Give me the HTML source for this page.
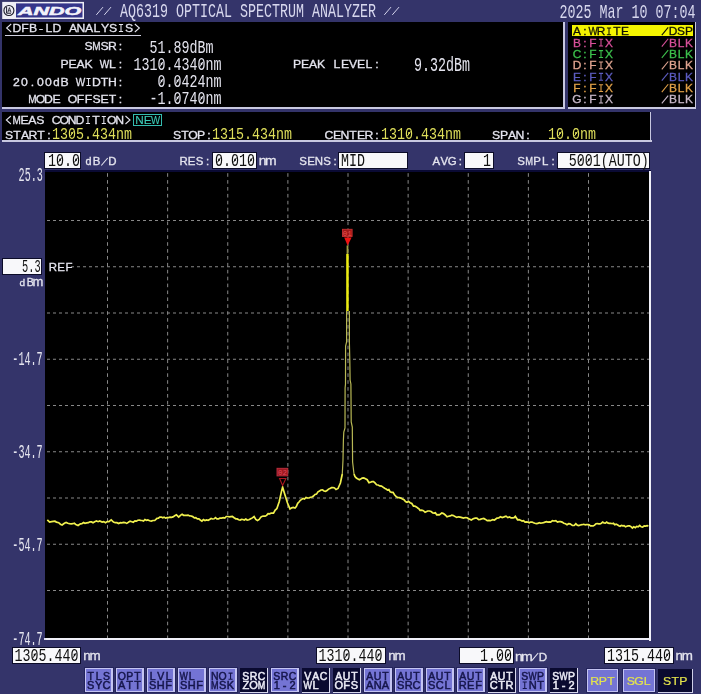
<!DOCTYPE html>
<html><head><meta charset="utf-8"><style>
html,body{margin:0;padding:0;}
body{width:701px;height:694px;background:#34346a;position:relative;overflow:hidden;font-family:"Liberation Mono",monospace;}
body>div{position:absolute;}
.t{position:absolute;white-space:pre;line-height:1;transform-origin:0 0;font-family:"Liberation Mono",monospace;}
</style></head><body>
<svg style="position:absolute;left:0;top:0" width="90" height="22" viewBox="0 0 90 22"><rect x="2.2" y="1.9" width="81.8" height="17.1" fill="#eeeef6"/><rect x="16" y="3.4" width="66.5" height="14.1" fill="#35358a"/><circle cx="8.9" cy="10.5" r="5.0" fill="none" stroke="#1a1a2a" stroke-width="1.1"/><path d="M6.6 7 V13.2 H11" fill="none" stroke="#1a1a2a" stroke-width="1"/><path d="M7.8 12.4 L9.4 7.6 L11 12.4 M8.4 10.8 H10.4" fill="none" stroke="#1a1a2a" stroke-width="0.8"/><text transform="scale(1.85,1)" x="26.8" y="14.9" text-anchor="middle" font-family="Liberation Sans" font-weight="bold" font-style="italic" font-size="11.6" fill="#f2f2fa" stroke="#f2f2fa" stroke-width="0.5">ANDO</text></svg>
<div style="left:2px;top:21.5px;width:561px;height:85.5px;background:#000;"></div>
<div style="left:563px;top:21.5px;width:1.5px;height:87px;background:#c8c8e0;"></div>
<div style="left:2px;top:107px;width:562px;height:1.6px;background:#c8c8e0;"></div>
<div style="left:5px;top:35px;width:136px;height:1.3px;background:#d0d0e0;"></div>
<div style="left:568px;top:22px;width:127px;height:85px;background:#000;"></div>
<div style="left:694.6px;top:22px;width:1.3px;height:86.6px;background:#c8c8e0;"></div>
<div style="left:568px;top:107px;width:128px;height:1.6px;background:#c8c8e0;"></div>
<div style="left:571.5px;top:25.4px;width:121.5px;height:10.4px;background:#f4f400;"></div>
<div style="left:2px;top:112px;width:648px;height:28px;background:#000;"></div>
<div style="left:649.7px;top:112px;width:1.4px;height:29.5px;background:#c8c8e0;"></div>
<div style="left:2px;top:140px;width:649.5px;height:1.5px;background:#c8c8e0;"></div>
<div style="left:133.3px;top:113.6px;width:28.7px;height:12.4px;box-sizing:border-box;border:1.2px solid #34bcb0"></div>
<div style="left:44.1px;top:151.7px;width:37.4px;height:17.80000000000001px;background:#0c0c28;"></div>
<div style="left:45.1px;top:152.7px;width:35.4px;height:15.800000000000011px;background:#f8f8fa;"></div>
<div style="left:211.7px;top:151.7px;width:45.60000000000002px;height:17.80000000000001px;background:#0c0c28;"></div>
<div style="left:212.7px;top:152.7px;width:43.60000000000002px;height:15.800000000000011px;background:#f8f8fa;"></div>
<div style="left:338.4px;top:151.7px;width:69.40000000000003px;height:17.80000000000001px;background:#0c0c28;"></div>
<div style="left:339.4px;top:152.7px;width:67.40000000000003px;height:15.800000000000011px;background:#f8f8fa;"></div>
<div style="left:464.3px;top:151.7px;width:29.69999999999999px;height:17.80000000000001px;background:#0c0c28;"></div>
<div style="left:465.3px;top:152.7px;width:27.69999999999999px;height:15.800000000000011px;background:#f8f8fa;"></div>
<div style="left:557.2px;top:151.7px;width:92.79999999999995px;height:17.80000000000001px;background:#0c0c28;"></div>
<div style="left:558.2px;top:152.7px;width:90.79999999999995px;height:15.800000000000011px;background:#f8f8fa;"></div>
<div style="left:45px;top:170px;width:606px;height:470px;background:#0a0a34;"></div>
<div style="left:45px;top:171.8px;width:604.5px;height:466.7px;background:#000;"></div>
<div style="left:649px;top:171px;width:2px;height:469.5px;background:#f0f0f8;"></div>
<div style="left:45px;top:638px;width:606px;height:2.2px;background:#f0f0f8;"></div>
<div style="left:43.5px;top:637.5px;width:2px;height:2px;background:#e0e0f0;"></div>
<svg style="position:absolute;left:0;top:0" width="701" height="694" viewBox="0 0 701 694">
<g stroke="#888888" stroke-width="1" fill="none"><line x1="107.5" y1="173.2" x2="107.5" y2="638" stroke-dasharray="3.6 3.3"/><line x1="167.625" y1="173.2" x2="167.625" y2="638" stroke-dasharray="3.6 3.3"/><line x1="227.75" y1="173.2" x2="227.75" y2="638" stroke-dasharray="3.6 3.3"/><line x1="287.875" y1="173.2" x2="287.875" y2="638" stroke-dasharray="3.6 3.3"/><line x1="348.0" y1="173.2" x2="348.0" y2="638" stroke-dasharray="3.6 3.3"/><line x1="408.125" y1="173.2" x2="408.125" y2="638" stroke-dasharray="3.6 3.3"/><line x1="468.25" y1="173.2" x2="468.25" y2="638" stroke-dasharray="3.6 3.3"/><line x1="528.375" y1="173.2" x2="528.375" y2="638" stroke-dasharray="3.6 3.3"/><line x1="588.5" y1="173.2" x2="588.5" y2="638" stroke-dasharray="3.6 3.3"/><line x1="47" y1="220.5" x2="649" y2="220.5" stroke-dasharray="3 3"/><line x1="47" y1="266.75" x2="649" y2="266.75" stroke-dasharray="3 3"/><line x1="47" y1="313.0" x2="649" y2="313.0" stroke-dasharray="3 3"/><line x1="47" y1="359.25" x2="649" y2="359.25" stroke-dasharray="3 3"/><line x1="47" y1="405.5" x2="649" y2="405.5" stroke-dasharray="3 3"/><line x1="47" y1="451.75" x2="649" y2="451.75" stroke-dasharray="3 3"/><line x1="47" y1="498.0" x2="649" y2="498.0" stroke-dasharray="3 3"/><line x1="47" y1="544.25" x2="649" y2="544.25" stroke-dasharray="3 3"/><line x1="47" y1="590.5" x2="649" y2="590.5" stroke-dasharray="3 3"/></g>
<polyline points="47.3,519.8 49.6,522.1 51.8,521.6 53.3,521.4 54.9,521.2 56.4,522.1 58.7,522.7 60.4,524.2 62.1,525.0 64.4,523.3 66.1,522.4 67.8,523.3 69.5,523.6 71.3,523.8 72.8,523.7 74.3,523.3 75.8,524.4 78.1,525.5 80.4,523.8 81.9,523.6 83.5,522.5 85.0,523.3 86.7,522.9 88.4,522.7 89.9,521.8 91.5,521.9 93.0,522.7 94.7,521.7 96.4,521.0 98.1,521.7 99.8,521.0 102.1,522.1 103.8,521.6 105.5,522.7 107.2,521.6 108.9,521.6 111.2,519.8 113.5,522.1 115.2,522.7 116.9,522.7 118.6,523.6 120.3,522.7 121.9,522.8 123.4,522.4 125.0,522.6 126.7,523.4 128.4,522.3 130.1,521.1 131.8,521.7 133.3,522.2 134.9,520.9 136.4,521.1 137.8,520.2 139.2,520.0 140.7,520.3 142.1,520.5 143.5,521.0 144.9,519.6 146.4,520.3 147.8,520.0 149.6,520.8 151.3,521.1 153.0,520.5 154.7,520.5 157.0,518.3 158.4,518.2 159.8,517.1 161.3,517.0 162.7,517.7 164.1,517.1 165.6,518.1 167.0,517.6 168.4,517.7 169.9,517.1 171.5,517.3 173.0,516.9 174.7,515.8 176.4,514.8 178.7,517.1 180.4,515.3 182.1,514.3 183.6,515.3 185.1,515.4 186.6,515.4 188.1,515.1 189.7,515.9 191.2,516.0 192.7,516.6 194.3,517.9 195.8,517.7 197.3,518.9 198.8,518.8 200.3,520.0 201.9,521.1 203.4,519.6 205.0,520.5 206.5,520.0 208.1,520.3 209.6,519.4 211.1,518.5 212.6,519.0 214.1,518.8 215.5,517.7 216.9,518.8 218.4,518.9 219.8,518.2 221.6,518.1 223.3,517.7 224.8,518.1 226.3,516.5 227.8,516.5 229.3,516.9 230.9,516.7 232.4,516.5 234.1,517.8 235.8,518.8 237.2,518.9 238.7,519.8 240.1,520.1 241.5,519.4 242.9,519.5 244.3,520.0 245.8,519.0 247.2,520.0 248.9,519.8 250.7,518.8 252.4,517.9 254.1,516.5 255.8,519.5 257.5,520.5 259.2,519.4 260.9,517.1 262.3,516.2 263.8,516.0 265.2,516.2 266.6,515.4 268.1,513.7 269.7,513.8 271.2,513.1 273.5,513.1 275.2,510.1 276.9,508.5 279.2,501.7 281.5,491.4 282.6,487.2 285.0,495.0 287.5,503.0 290.0,509.0 291.7,507.9 293.3,507.5 295.0,508.0 296.3,506.5 297.7,503.3 299.0,502.0 300.3,500.3 301.7,499.4 303.0,498.5 304.5,499.1 306.0,497.4 307.5,498.0 309.0,498.0 310.5,497.2 312.0,497.0 313.5,496.0 315.0,494.5 316.5,494.1 318.0,491.8 319.5,491.0 321.0,490.0 322.5,489.8 324.0,491.0 325.5,491.3 327.0,490.5 328.5,489.1 330.0,488.4 331.5,487.7 333.0,487.5 334.5,488.0 336.0,489.5 338.0,488.5 340.4,483.0 342.3,474.0" fill="none" stroke="#f0f04e" stroke-width="1.7" stroke-linejoin="miter"/>
<polyline points="354.0,474.0 355.0,476.5 356.4,478.1 357.9,478.9 359.3,479.8 360.7,479.1 362.1,478.1 363.8,477.9 365.5,478.7 367.2,479.7 369.0,482.7 370.5,482.2 372.0,481.7 373.5,481.6 375.0,482.9 376.6,484.8 378.1,485.0 379.8,485.9 381.5,486.1 383.0,487.1 384.6,488.3 386.1,489.0 387.5,490.0 388.9,489.5 390.2,491.8 391.6,492.3 393.0,492.4 394.5,494.8 396.0,496.4 397.5,497.5 399.2,497.6 400.9,498.1 402.4,499.0 404.0,499.6 405.5,501.5 407.0,502.2 408.6,501.4 410.1,502.7 411.8,503.5 413.5,506.1 414.9,506.2 416.4,506.9 417.8,508.0 419.2,509.0 420.0,510.4 421.7,510.1 423.4,510.7 425.1,512.3 427.7,511.0 429.4,511.0 431.1,511.5 432.8,513.0 434.1,513.1 435.4,512.8 436.7,514.9 438.0,514.7 439.3,514.9 441.8,513.0 443.5,513.6 445.3,515.0 447.0,516.8 448.6,516.2 450.2,515.9 451.8,515.1 453.4,515.5 455.1,516.6 456.8,517.4 458.5,516.8 460.2,517.2 461.9,517.6 463.6,518.1 465.3,517.5 467.1,517.7 468.8,518.7 471.3,520.0 473.2,518.7 475.2,518.1 476.9,518.1 478.6,519.6 480.3,519.4 482.0,518.7 483.8,518.4 485.5,519.4 487.2,520.7 488.9,520.3 490.6,520.7 492.6,519.6 494.5,520.0 497.0,518.1 498.7,518.0 500.5,516.8 502.2,517.5 504.1,516.9 506.0,516.2 507.8,517.6 509.6,517.0 511.1,517.9 512.6,517.8 514.1,517.6 515.3,516.4 517.6,519.8 519.1,519.7 520.6,520.3 522.1,521.0 523.5,520.6 525.0,522.1 526.4,521.9 527.8,522.1 529.2,522.8 530.6,522.1 532.1,522.0 533.5,522.7 534.9,523.3 536.4,523.7 537.8,523.4 539.2,522.7 540.7,523.2 542.1,523.0 543.5,522.7 545.0,522.1 546.4,521.6 547.9,522.1 549.3,521.8 550.7,522.1 552.4,520.6 554.1,521.0 555.8,520.6 557.5,522.1 559.0,521.7 560.6,521.6 562.1,522.1 563.8,523.3 565.5,523.8 567.0,524.7 568.6,523.7 570.1,523.8 572.4,525.5 574.1,525.5 575.8,523.8 577.3,525.2 578.8,525.5 580.3,525.0 582.0,524.7 583.6,524.3 585.3,524.8 586.6,524.5 587.9,524.6 589.2,524.9 590.5,525.9 591.8,525.9 593.2,526.0 594.6,525.1 596.0,523.7 597.4,523.5 598.7,523.8 600.0,523.9 601.4,523.2 602.7,522.1 604.0,523.0 605.4,523.2 606.7,522.1 608.1,523.1 609.4,523.4 610.8,523.3 612.1,523.7 613.4,523.3 614.8,524.8 616.1,524.2 617.4,524.8 618.8,525.7 620.1,526.3 621.4,525.4 622.8,525.9 624.1,525.7 625.5,526.8 626.8,526.3 628.1,525.9 629.5,525.9 631.0,526.6 632.4,528.0 633.8,526.8 635.3,527.7 636.7,526.4 638.2,526.9 639.7,525.5 641.2,526.8 642.7,527.0 644.2,525.9 645.6,526.2 647.0,525.6 648.4,525.9" fill="none" stroke="#f0f04e" stroke-width="1.7" stroke-linejoin="miter"/>
<polyline points="342.3,474 343,460 343.4,440 343.8,432 345,428 345.1,388 345.5,384 345.6,346 346.6,342 346.6,311" fill="none" stroke="#b8b855" stroke-width="1.2"/>
<polyline points="349.4,311 349.4,343 349.8,360 350.1,380 350.9,384 351.2,422 352.3,427 352.6,462 354,474" fill="none" stroke="#b8b855" stroke-width="1.2"/>
<rect x="346.2" y="254" width="2.5" height="57" fill="#ecec10"/>
<rect x="346.6" y="245.5" width="1.8" height="8.5" fill="#a0a040"/>
<rect x="342.5" y="229.3" width="9.6" height="7.2" fill="#a01818" stroke="#c83030" stroke-width="0.9"/><text x="347.3" y="235.8" text-anchor="middle" font-family="Liberation Mono" font-size="7.5" fill="#e85050" transform="scale(1,1)">01</text>
<path d="M344.2 237.6 L351.6 237.6 L347.6 245.5 Z" fill="#f01212"/>
<rect x="277" y="468.3" width="10.8" height="7.6" fill="#9a1820" stroke="#c03040" stroke-width="0.9"/><text x="282.4" y="475" text-anchor="middle" font-family="Liberation Mono" font-size="7.5" fill="#e04858">02</text>
<path d="M279.6 478.5 L285.9 478.5 L282.6 485.5 Z" fill="none" stroke="#a81820" stroke-width="1.1"/>
</svg>
<div style="left:1.9px;top:258px;width:40.5px;height:17.30000000000001px;background:#0c0c28;"></div>
<div style="left:2.9px;top:259px;width:38.5px;height:15.300000000000011px;background:#f8f8fa;"></div>
<div style="left:11.8px;top:647.3px;width:68.8px;height:16.5px;background:#0c0c28;"></div>
<div style="left:12.8px;top:648.3px;width:66.8px;height:14.5px;background:#f8f8fa;"></div>
<div style="left:315.7px;top:646.6px;width:70.60000000000002px;height:17.399999999999977px;background:#0c0c28;"></div>
<div style="left:316.7px;top:647.6px;width:68.60000000000002px;height:15.399999999999977px;background:#f8f8fa;"></div>
<div style="left:459.2px;top:646.6px;width:55.099999999999966px;height:17.399999999999977px;background:#0c0c28;"></div>
<div style="left:460.2px;top:647.6px;width:53.099999999999966px;height:15.399999999999977px;background:#f8f8fa;"></div>
<div style="left:604.2px;top:646.7px;width:69.39999999999998px;height:17.399999999999977px;background:#0c0c28;"></div>
<div style="left:605.2px;top:647.7px;width:67.39999999999998px;height:15.399999999999977px;background:#f8f8fa;"></div>
<div style="left:84.0px;top:667.2px;width:29.5px;height:26px;background:#24245c;"></div>
<div style="left:85.0px;top:668.2px;width:27.5px;height:23.6px;background:#c4c4f2;"></div>
<div style="left:86.1px;top:669.3px;width:25.3px;height:21.4px;background:#7474d4;"></div>
<div style="left:115.0px;top:667.2px;width:29.5px;height:26px;background:#24245c;"></div>
<div style="left:116.0px;top:668.2px;width:27.5px;height:23.6px;background:#c4c4f2;"></div>
<div style="left:117.1px;top:669.3px;width:25.3px;height:21.4px;background:#7474d4;"></div>
<div style="left:146.0px;top:667.2px;width:29.5px;height:26px;background:#24245c;"></div>
<div style="left:147.0px;top:668.2px;width:27.5px;height:23.6px;background:#c4c4f2;"></div>
<div style="left:148.1px;top:669.3px;width:25.3px;height:21.4px;background:#7474d4;"></div>
<div style="left:177.0px;top:667.2px;width:29.5px;height:26px;background:#24245c;"></div>
<div style="left:178.0px;top:668.2px;width:27.5px;height:23.6px;background:#c4c4f2;"></div>
<div style="left:179.1px;top:669.3px;width:25.3px;height:21.4px;background:#7474d4;"></div>
<div style="left:208.0px;top:667.2px;width:29.5px;height:26px;background:#24245c;"></div>
<div style="left:209.0px;top:668.2px;width:27.5px;height:23.6px;background:#c4c4f2;"></div>
<div style="left:210.1px;top:669.3px;width:25.3px;height:21.4px;background:#7474d4;"></div>
<div style="left:239.5px;top:668px;width:28.5px;height:25px;background:#d8d8ee;"></div>
<div style="left:239.5px;top:668px;width:27.3px;height:23.8px;background:#0a0a30;"></div>
<div style="left:270.0px;top:667.2px;width:29.5px;height:26px;background:#24245c;"></div>
<div style="left:271.0px;top:668.2px;width:27.5px;height:23.6px;background:#c4c4f2;"></div>
<div style="left:272.1px;top:669.3px;width:25.3px;height:21.4px;background:#7474d4;"></div>
<div style="left:301.5px;top:668px;width:28.5px;height:25px;background:#d8d8ee;"></div>
<div style="left:301.5px;top:668px;width:27.3px;height:23.8px;background:#0a0a30;"></div>
<div style="left:332.5px;top:668px;width:28.5px;height:25px;background:#d8d8ee;"></div>
<div style="left:332.5px;top:668px;width:27.3px;height:23.8px;background:#0a0a30;"></div>
<div style="left:363.0px;top:667.2px;width:29.5px;height:26px;background:#24245c;"></div>
<div style="left:364.0px;top:668.2px;width:27.5px;height:23.6px;background:#c4c4f2;"></div>
<div style="left:365.1px;top:669.3px;width:25.3px;height:21.4px;background:#7474d4;"></div>
<div style="left:394.0px;top:667.2px;width:29.5px;height:26px;background:#24245c;"></div>
<div style="left:395.0px;top:668.2px;width:27.5px;height:23.6px;background:#c4c4f2;"></div>
<div style="left:396.1px;top:669.3px;width:25.3px;height:21.4px;background:#7474d4;"></div>
<div style="left:425.0px;top:667.2px;width:29.5px;height:26px;background:#24245c;"></div>
<div style="left:426.0px;top:668.2px;width:27.5px;height:23.6px;background:#c4c4f2;"></div>
<div style="left:427.1px;top:669.3px;width:25.3px;height:21.4px;background:#7474d4;"></div>
<div style="left:456.0px;top:667.2px;width:29.5px;height:26px;background:#24245c;"></div>
<div style="left:457.0px;top:668.2px;width:27.5px;height:23.6px;background:#c4c4f2;"></div>
<div style="left:458.1px;top:669.3px;width:25.3px;height:21.4px;background:#7474d4;"></div>
<div style="left:487.5px;top:668px;width:28.5px;height:25px;background:#d8d8ee;"></div>
<div style="left:487.5px;top:668px;width:27.3px;height:23.8px;background:#0a0a30;"></div>
<div style="left:518.0px;top:667.2px;width:29.5px;height:26px;background:#24245c;"></div>
<div style="left:519.0px;top:668.2px;width:27.5px;height:23.6px;background:#c4c4f2;"></div>
<div style="left:520.1px;top:669.3px;width:25.3px;height:21.4px;background:#7474d4;"></div>
<div style="left:549.5px;top:668px;width:28.5px;height:25px;background:#d8d8ee;"></div>
<div style="left:549.5px;top:668px;width:27.3px;height:23.8px;background:#0a0a30;"></div>
<div style="left:586px;top:667.5px;width:33px;height:25.5px;background:#24245c;"></div>
<div style="left:587px;top:668.5px;width:31px;height:23.4px;background:#c4c4f2;"></div>
<div style="left:588.1px;top:669.6px;width:28.8px;height:21.2px;background:#7474d4;"></div>
<div style="left:621.7px;top:667.5px;width:34.09999999999991px;height:25.5px;background:#24245c;"></div>
<div style="left:622.7px;top:668.5px;width:32.09999999999991px;height:23.4px;background:#c4c4f2;"></div>
<div style="left:623.8000000000001px;top:669.6px;width:29.89999999999991px;height:21.2px;background:#7474d4;"></div>
<div style="left:658.3px;top:668.5px;width:34.30000000000007px;height:24.5px;background:#d0d0e8;"></div>
<div style="left:658.3px;top:668.5px;width:33.30000000000007px;height:23px;background:#0a0a30;"></div>
<svg style="position:absolute;left:0;top:0;will-change:transform" width="701" height="694"><text transform="scale(1,1.4545)" x="124.00 132.00 140.00 148.00 156.00 164.00 180.00 188.00 196.00 204.00 212.00 220.00 228.00 244.00 252.00 260.00 268.00 276.00 284.00 292.00 300.00 316.00 324.00 332.00 340.00 348.00 356.00 364.00 372.00" y="11.89" font-family="Liberation Mono" font-size="13.333" fill="#d8d8ee" text-anchor="middle">AQ6319OPTICALSPECTRUMANALYZER</text><line x1="96.3" y1="14.9" x2="103.0" y2="7.1" stroke="#d4d4ec" stroke-width="1"/><line x1="104.3" y1="14.9" x2="111.0" y2="7.1" stroke="#d4d4ec" stroke-width="1"/><line x1="384.3" y1="14.9" x2="391.0" y2="7.1" stroke="#d4d4ec" stroke-width="1"/><line x1="392.3" y1="14.9" x2="399.0" y2="7.1" stroke="#d4d4ec" stroke-width="1"/><text transform="scale(1,1.4773)" x="563.50 571.50 579.50 587.50 603.50 611.50 619.50 635.50 643.50 659.50 667.50 675.50 683.50 691.50" y="12.18" font-family="Liberation Mono" font-size="13.333" fill="#d8d8ee" text-anchor="middle">2025Mar1007:04</text><path d="M11.20 24.00L6.60 28.00L11.20 32.00" stroke="#e4e4ee" stroke-width="1.05" fill="none"/><path d="M118.92 24.50H123.08M121.00 24.00V32.00M118.92 31.50H123.08" stroke="#e4e4ee" stroke-width="1.05" fill="none"/><path d="M134.80 24.00L139.40 28.00L134.80 32.00" stroke="#e4e4ee" stroke-width="1.05" fill="none"/><text transform="scale(1.0500,1)" x="16.19 23.81 31.43 39.05 46.67 54.29 69.52 77.14 84.76 92.38 100.00 107.62 122.86" y="32.00" font-family="Liberation Sans" font-size="11.628" fill="#e4e4ee" text-anchor="middle" stroke="#e4e4ee" stroke-width="0.3">DFB-LDANALYSS</text><text transform="scale(1.0500,1)" x="84.29 99.52 107.14 114.76" y="50.00" font-family="Liberation Sans" font-size="11.628" fill="#e4e4ee" text-anchor="middle" stroke="#e4e4ee" stroke-width="0.3">SSR:</text><text transform="scale(0.8610,1)" x="112.08" y="50.00" font-family="Liberation Sans" font-size="11.628" fill="#e4e4ee" text-anchor="middle" stroke="#e4e4ee" stroke-width="0.3">M</text><text transform="scale(1,1.4205)" x="153.50 161.50 169.50 177.50 185.50 193.50 201.50 209.50" y="37.66" font-family="Liberation Mono" font-size="13.333" fill="#e4e4ee" text-anchor="middle">51.89dBm</text><text transform="scale(1.0500,1)" x="61.43 69.05 76.67 84.29 107.14 114.76" y="68.00" font-family="Liberation Sans" font-size="11.628" fill="#e4e4ee" text-anchor="middle" stroke="#e4e4ee" stroke-width="0.3">PEAKL:</text><text transform="scale(0.8610,1)" x="121.37" y="68.00" font-family="Liberation Sans" font-size="11.628" fill="#e4e4ee" text-anchor="middle" stroke="#e4e4ee" stroke-width="0.3">W</text><text transform="scale(1,1.4205)" x="137.50 145.50 153.50 161.50 169.50 177.50 185.50 193.50 201.50 209.50 217.50" y="49.63" font-family="Liberation Mono" font-size="13.333" fill="#e4e4ee" text-anchor="middle">1310.4340nm</text><line x1="163.10" y1="61.75" x2="159.90" y2="66.75" stroke="#e4e4ee" stroke-width="1"/><line x1="203.10" y1="61.75" x2="199.90" y2="66.75" stroke="#e4e4ee" stroke-width="1"/><path d="M86.42 78.50H90.58M88.50 78.00V86.00M86.42 85.50H90.58" stroke="#e4e4ee" stroke-width="1.05" fill="none"/><text transform="scale(1.0500,1)" x="15.71 23.33 30.95 38.57 46.19 61.43 91.90 99.52 107.14 114.76" y="86.00" font-family="Liberation Sans" font-size="11.628" fill="#e4e4ee" text-anchor="middle" stroke="#e4e4ee" stroke-width="0.3">20.00BDTH:</text><text transform="scale(1.0500,1)" x="53.81" y="86.00" font-family="Liberation Sans" font-size="10.974" fill="#e4e4ee" text-anchor="middle" stroke="#e4e4ee" stroke-width="0.3">d</text><text transform="scale(0.8610,1)" x="93.50" y="86.00" font-family="Liberation Sans" font-size="11.628" fill="#e4e4ee" text-anchor="middle" stroke="#e4e4ee" stroke-width="0.3">W</text><text transform="scale(1,1.4205)" x="161.50 169.50 177.50 185.50 193.50 201.50 209.50 217.50" y="61.60" font-family="Liberation Mono" font-size="13.333" fill="#e4e4ee" text-anchor="middle">0.0424nm</text><line x1="163.10" y1="78.75" x2="159.90" y2="83.75" stroke="#e4e4ee" stroke-width="1"/><line x1="179.10" y1="78.75" x2="175.90" y2="83.75" stroke="#e4e4ee" stroke-width="1"/><text transform="scale(0.8610,1)" x="37.75" y="103.00" font-family="Liberation Sans" font-size="11.628" fill="#e4e4ee" text-anchor="middle" stroke="#e4e4ee" stroke-width="0.3">M</text><text transform="scale(1.0500,1)" x="38.57 46.19 53.81 69.05 76.67 84.29 91.90 99.52 107.14 114.76" y="103.00" font-family="Liberation Sans" font-size="11.628" fill="#e4e4ee" text-anchor="middle" stroke="#e4e4ee" stroke-width="0.3">ODEOFFSET:</text><text transform="scale(1,1.4205)" x="153.50 161.50 169.50 177.50 185.50 193.50 201.50 209.50 217.50" y="73.57" font-family="Liberation Mono" font-size="13.333" fill="#e4e4ee" text-anchor="middle">-1.0740nm</text><line x1="179.10" y1="95.75" x2="175.90" y2="100.75" stroke="#e4e4ee" stroke-width="1"/><line x1="203.10" y1="95.75" x2="199.90" y2="100.75" stroke="#e4e4ee" stroke-width="1"/><text transform="scale(1.0500,1)" x="282.86 290.48 298.10 305.71 320.95 328.57 336.19 343.81 351.43 359.05" y="68.00" font-family="Liberation Sans" font-size="11.628" fill="#e4e4ee" text-anchor="middle" stroke="#e4e4ee" stroke-width="0.3">PEAKLEVEL:</text><text transform="scale(1,1.4773)" x="418.00 426.00 434.00 442.00 450.00 458.00 466.00" y="48.06" font-family="Liberation Mono" font-size="13.333" fill="#e4e4ee" text-anchor="middle">9.32dBm</text><path d="M606.92 27.90H611.08M609.00 27.40V35.20M606.92 34.70H611.08" stroke="#101000" stroke-width="1.05" fill="none"/><text transform="scale(1.0500,1)" x="549.52 557.14 572.38 587.62 595.24" y="35.20" font-family="Liberation Sans" font-size="11.337" fill="#101000" text-anchor="middle" stroke="#101000" stroke-width="0.3">A:RTE</text><text transform="scale(0.8610,1)" x="688.73" y="35.20" font-family="Liberation Sans" font-size="11.337" fill="#101000" text-anchor="middle" stroke="#101000" stroke-width="0.3">W</text><line x1="661.80" y1="35.20" x2="668.20" y2="27.40" stroke="#101000" stroke-width="1.1"/><text transform="scale(1.0500,1)" x="640.95 648.57 656.19" y="35.20" font-family="Liberation Sans" font-size="11.337" fill="#101000" text-anchor="middle" stroke="#101000" stroke-width="0.3">DSP</text><path d="M598.92 39.27H603.08M601.00 38.77V46.57M598.92 46.07H603.08" stroke="#d8509a" stroke-width="1.05" fill="none"/><text transform="scale(1.0500,1)" x="549.52 557.14 564.76 580.00" y="46.57" font-family="Liberation Sans" font-size="11.337" fill="#d8509a" text-anchor="middle" stroke="#d8509a" stroke-width="0.3">B:FX</text><line x1="661.80" y1="46.57" x2="668.20" y2="38.77" stroke="#d8509a" stroke-width="1.1"/><text transform="scale(1.0500,1)" x="640.95 648.57 656.19" y="46.57" font-family="Liberation Sans" font-size="11.337" fill="#d8509a" text-anchor="middle" stroke="#d8509a" stroke-width="0.3">BLK</text><path d="M598.92 50.64H603.08M601.00 50.14V57.94M598.92 57.44H603.08" stroke="#3cc04c" stroke-width="1.05" fill="none"/><text transform="scale(1.0500,1)" x="549.52 557.14 564.76 580.00" y="57.94" font-family="Liberation Sans" font-size="11.337" fill="#3cc04c" text-anchor="middle" stroke="#3cc04c" stroke-width="0.3">C:FX</text><line x1="661.80" y1="57.94" x2="668.20" y2="50.14" stroke="#3cc04c" stroke-width="1.1"/><text transform="scale(1.0500,1)" x="640.95 648.57 656.19" y="57.94" font-family="Liberation Sans" font-size="11.337" fill="#3cc04c" text-anchor="middle" stroke="#3cc04c" stroke-width="0.3">BLK</text><path d="M598.92 62.01H603.08M601.00 61.51V69.31M598.92 68.81H603.08" stroke="#e0a490" stroke-width="1.05" fill="none"/><text transform="scale(1.0500,1)" x="549.52 557.14 564.76 580.00" y="69.31" font-family="Liberation Sans" font-size="11.337" fill="#e0a490" text-anchor="middle" stroke="#e0a490" stroke-width="0.3">D:FX</text><line x1="661.80" y1="69.31" x2="668.20" y2="61.51" stroke="#e0a490" stroke-width="1.1"/><text transform="scale(1.0500,1)" x="640.95 648.57 656.19" y="69.31" font-family="Liberation Sans" font-size="11.337" fill="#e0a490" text-anchor="middle" stroke="#e0a490" stroke-width="0.3">BLK</text><path d="M598.92 73.38H603.08M601.00 72.88V80.68M598.92 80.18H603.08" stroke="#5c5cc0" stroke-width="1.05" fill="none"/><text transform="scale(1.0500,1)" x="549.52 557.14 564.76 580.00" y="80.68" font-family="Liberation Sans" font-size="11.337" fill="#5c5cc0" text-anchor="middle" stroke="#5c5cc0" stroke-width="0.3">E:FX</text><line x1="661.80" y1="80.68" x2="668.20" y2="72.88" stroke="#5c5cc0" stroke-width="1.1"/><text transform="scale(1.0500,1)" x="640.95 648.57 656.19" y="80.68" font-family="Liberation Sans" font-size="11.337" fill="#5c5cc0" text-anchor="middle" stroke="#5c5cc0" stroke-width="0.3">BLK</text><path d="M598.92 84.75H603.08M601.00 84.25V92.05M598.92 91.55H603.08" stroke="#e0a048" stroke-width="1.05" fill="none"/><text transform="scale(1.0500,1)" x="549.52 557.14 564.76 580.00" y="92.05" font-family="Liberation Sans" font-size="11.337" fill="#e0a048" text-anchor="middle" stroke="#e0a048" stroke-width="0.3">F:FX</text><line x1="661.80" y1="92.05" x2="668.20" y2="84.25" stroke="#e0a048" stroke-width="1.1"/><text transform="scale(1.0500,1)" x="640.95 648.57 656.19" y="92.05" font-family="Liberation Sans" font-size="11.337" fill="#e0a048" text-anchor="middle" stroke="#e0a048" stroke-width="0.3">BLK</text><path d="M598.92 96.12H603.08M601.00 95.62V103.42M598.92 102.92H603.08" stroke="#c8b8c8" stroke-width="1.05" fill="none"/><text transform="scale(1.0500,1)" x="549.52 557.14 564.76 580.00" y="103.42" font-family="Liberation Sans" font-size="11.337" fill="#c8b8c8" text-anchor="middle" stroke="#c8b8c8" stroke-width="0.3">G:FX</text><line x1="661.80" y1="103.42" x2="668.20" y2="95.62" stroke="#c8b8c8" stroke-width="1.1"/><text transform="scale(1.0500,1)" x="640.95 648.57 656.19" y="103.42" font-family="Liberation Sans" font-size="11.337" fill="#c8b8c8" text-anchor="middle" stroke="#c8b8c8" stroke-width="0.3">BLK</text><path d="M10.90 116.00L6.30 120.00L10.90 124.00" stroke="#e4e4ee" stroke-width="1.05" fill="none"/><path d="M85.90 116.50H90.03M87.97 116.00V124.00M85.90 123.50H90.03" stroke="#e4e4ee" stroke-width="1.05" fill="none"/><path d="M101.76 116.50H105.89M103.83 116.00V124.00M101.76 123.50H105.89" stroke="#e4e4ee" stroke-width="1.05" fill="none"/><path d="M125.45 116.00L130.05 120.00L125.45 124.00" stroke="#e4e4ee" stroke-width="1.05" fill="none"/><text transform="scale(0.8610,1)" x="19.27" y="124.00" font-family="Liberation Sans" font-size="11.628" fill="#e4e4ee" text-anchor="middle" stroke="#e4e4ee" stroke-width="0.3">M</text><text transform="scale(1.0500,1)" x="23.36 30.91 38.46 53.57 61.12 68.67 76.22 91.33 106.43 113.99" y="124.00" font-family="Liberation Sans" font-size="11.628" fill="#e4e4ee" text-anchor="middle" stroke="#e4e4ee" stroke-width="0.3">EASCONDTON</text><text transform="scale(1.0500,1)" x="132.95 140.57" y="123.80" font-family="Liberation Sans" font-size="11.192" fill="#3cccb8" text-anchor="middle" stroke="#3cccb8" stroke-width="0.1">NE</text><text transform="scale(0.8610,1)" x="180.72" y="123.80" font-family="Liberation Sans" font-size="11.192" fill="#3cccb8" text-anchor="middle" stroke="#3cccb8" stroke-width="0.1">W</text><text transform="scale(1.0500,1)" x="8.57 16.19 23.81 31.43 39.05 46.67" y="139.00" font-family="Liberation Sans" font-size="11.628" fill="#e4e4ee" text-anchor="middle" stroke="#e4e4ee" stroke-width="0.3">START:</text><text transform="scale(1,1.3068)" x="56.00 64.00 72.00 80.00 88.00 96.00 104.00 112.00 120.00 128.00" y="106.75" font-family="Liberation Mono" font-size="13.333" fill="#dede5a" text-anchor="middle">1305.434nm</text><line x1="73.60" y1="131.45" x2="70.40" y2="136.05" stroke="#dede5a" stroke-width="1"/><text transform="scale(1.0500,1)" x="168.57 176.19 183.81 191.43 199.05" y="139.00" font-family="Liberation Sans" font-size="11.628" fill="#e4e4ee" text-anchor="middle" stroke="#e4e4ee" stroke-width="0.3">STOP:</text><text transform="scale(1,1.3068)" x="216.00 224.00 232.00 240.00 248.00 256.00 264.00 272.00 280.00 288.00" y="106.75" font-family="Liberation Mono" font-size="13.333" fill="#dede5a" text-anchor="middle">1315.434nm</text><text transform="scale(1.0500,1)" x="313.33 320.95 328.57 336.19 343.81 351.43 359.05" y="139.00" font-family="Liberation Sans" font-size="11.628" fill="#e4e4ee" text-anchor="middle" stroke="#e4e4ee" stroke-width="0.3">CENTER:</text><text transform="scale(1,1.3068)" x="385.00 393.00 401.00 409.00 417.00 425.00 433.00 441.00 449.00 457.00" y="106.75" font-family="Liberation Mono" font-size="13.333" fill="#dede5a" text-anchor="middle">1310.434nm</text><line x1="410.60" y1="131.45" x2="407.40" y2="136.05" stroke="#dede5a" stroke-width="1"/><text transform="scale(1.0500,1)" x="472.38 480.00 487.62 495.24 502.86" y="139.00" font-family="Liberation Sans" font-size="11.628" fill="#e4e4ee" text-anchor="middle" stroke="#e4e4ee" stroke-width="0.3">SPAN:</text><text transform="scale(1,1.3068)" x="552.00 560.00 568.00 576.00 584.00 592.00" y="106.75" font-family="Liberation Mono" font-size="13.333" fill="#dede5a" text-anchor="middle">10.0nm</text><line x1="561.60" y1="131.45" x2="558.40" y2="136.05" stroke="#dede5a" stroke-width="1"/><line x1="577.60" y1="131.45" x2="574.40" y2="136.05" stroke="#dede5a" stroke-width="1"/><text transform="scale(1,1.3636)" x="52.00 60.00 68.00 76.00" y="121.73" font-family="Liberation Mono" font-size="13.333" fill="#101010" text-anchor="middle">10.0</text><line x1="61.60" y1="157.60" x2="58.40" y2="162.40" stroke="#101010" stroke-width="1"/><line x1="77.60" y1="157.60" x2="74.40" y2="162.40" stroke="#101010" stroke-width="1"/><line x1="101.30" y1="165.50" x2="107.70" y2="158.00" stroke="#e4e4ee" stroke-width="1.1"/><text transform="scale(1.0500,1)" x="84.29" y="165.50" font-family="Liberation Sans" font-size="10.288" fill="#e4e4ee" text-anchor="middle" stroke="#e4e4ee" stroke-width="0.3">d</text><text transform="scale(1.0500,1)" x="91.90 107.14" y="165.50" font-family="Liberation Sans" font-size="10.901" fill="#e4e4ee" text-anchor="middle" stroke="#e4e4ee" stroke-width="0.3">BD</text><text transform="scale(1.0500,1)" x="174.86 182.48 190.10 197.71" y="165.10" font-family="Liberation Sans" font-size="10.901" fill="#e4e4ee" text-anchor="middle" stroke="#e4e4ee" stroke-width="0.3">RES:</text><text transform="scale(1,1.3636)" x="219.00 227.00 235.00 243.00 251.00" y="121.73" font-family="Liberation Mono" font-size="13.333" fill="#101010" text-anchor="middle">0.010</text><line x1="220.60" y1="157.60" x2="217.40" y2="162.40" stroke="#101010" stroke-width="1"/><line x1="236.60" y1="157.60" x2="233.40" y2="162.40" stroke="#101010" stroke-width="1"/><line x1="252.60" y1="157.60" x2="249.40" y2="162.40" stroke="#101010" stroke-width="1"/><text transform="scale(1.0500,1)" x="250.19 257.81" y="165.50" font-family="Liberation Sans" font-size="13.269" fill="#e4e4ee" text-anchor="middle" stroke="#e4e4ee" stroke-width="0.3">nm</text><text transform="scale(1.0500,1)" x="288.57 296.19 303.81 311.43 319.05" y="165.10" font-family="Liberation Sans" font-size="10.901" fill="#e4e4ee" text-anchor="middle" stroke="#e4e4ee" stroke-width="0.3">SENS:</text><text transform="scale(1,1.3636)" x="345.00 353.00 361.00" y="121.73" font-family="Liberation Mono" font-size="13.333" fill="#101010" text-anchor="middle">MID</text><text transform="scale(1.0500,1)" x="415.52 423.14 430.76 438.38" y="165.10" font-family="Liberation Sans" font-size="10.901" fill="#e4e4ee" text-anchor="middle" stroke="#e4e4ee" stroke-width="0.3">AVG:</text><text transform="scale(1,1.3636)" x="487.00" y="121.73" font-family="Liberation Mono" font-size="13.333" fill="#101010" text-anchor="middle">1</text><text transform="scale(1.0500,1)" x="496.38 511.62 519.24 526.86" y="165.10" font-family="Liberation Sans" font-size="10.901" fill="#e4e4ee" text-anchor="middle" stroke="#e4e4ee" stroke-width="0.3">SPL:</text><text transform="scale(0.8610,1)" x="614.63" y="165.10" font-family="Liberation Sans" font-size="10.901" fill="#e4e4ee" text-anchor="middle" stroke="#e4e4ee" stroke-width="0.3">M</text><text transform="scale(1,1.3636)" x="572.80 580.80 588.80 596.80 604.80 612.80 620.80 628.80 636.80 644.80" y="121.73" font-family="Liberation Mono" font-size="13.333" fill="#101010" text-anchor="middle">5001(AUTO)</text><line x1="582.40" y1="157.60" x2="579.20" y2="162.40" stroke="#101010" stroke-width="1"/><line x1="590.40" y1="157.60" x2="587.20" y2="162.40" stroke="#101010" stroke-width="1"/><text transform="scale(1,1.9534)" x="21.62 27.68 33.73 39.77" y="92.66" font-family="Liberation Mono" font-size="10.083" fill="#e4e4ee" text-anchor="middle">25.3</text><text transform="scale(1,1.6862)" x="25.10 31.30 37.50" y="161.60" font-family="Liberation Mono" font-size="10.333" fill="#101010" text-anchor="middle">5.3</text><text transform="scale(1.0500,1)" x="21.33" y="286.00" font-family="Liberation Sans" font-size="9.602" fill="#e4e4ee" text-anchor="middle" stroke="#e4e4ee" stroke-width="0.3">d</text><text transform="scale(1.0500,1)" x="28.76" y="286.00" font-family="Liberation Sans" font-size="10.174" fill="#e4e4ee" text-anchor="middle" stroke="#e4e4ee" stroke-width="0.3">B</text><text transform="scale(1.0500,1)" x="36.19" y="286.00" font-family="Liberation Sans" font-size="12.385" fill="#e4e4ee" text-anchor="middle" stroke="#e4e4ee" stroke-width="0.3">m</text><rect x="47" y="262" width="24" height="10" fill="#000"/><text transform="scale(1.0500,1)" x="50.48 58.10 65.71" y="271.50" font-family="Liberation Sans" font-size="10.901" fill="#e4e4ee" text-anchor="middle" stroke="#e4e4ee" stroke-width="0.3">REF</text><text transform="scale(1,1.9534)" x="15.38 21.43 27.48 33.52 39.57" y="186.85" font-family="Liberation Mono" font-size="10.083" fill="#e4e4ee" text-anchor="middle">-14.7</text><text transform="scale(1,1.9534)" x="15.38 21.43 27.48 33.52 39.57" y="234.56" font-family="Liberation Mono" font-size="10.083" fill="#e4e4ee" text-anchor="middle">-34.7</text><text transform="scale(1,1.9534)" x="15.38 21.43 27.48 33.52 39.57" y="282.27" font-family="Liberation Mono" font-size="10.083" fill="#e4e4ee" text-anchor="middle">-54.7</text><text transform="scale(1,1.9534)" x="15.38 21.43 27.48 33.52 39.57" y="329.99" font-family="Liberation Mono" font-size="10.083" fill="#e4e4ee" text-anchor="middle">-74.7</text><text transform="scale(1,1.3636)" x="18.50 26.50 34.50 42.50 50.50 58.50 66.50 74.50" y="485.10" font-family="Liberation Mono" font-size="13.333" fill="#101010" text-anchor="middle">1305.440</text><line x1="36.10" y1="653.10" x2="32.90" y2="657.90" stroke="#101010" stroke-width="1"/><line x1="76.10" y1="653.10" x2="72.90" y2="657.90" stroke="#101010" stroke-width="1"/><text transform="scale(1.0500,1)" x="82.86 90.48" y="660.20" font-family="Liberation Sans" font-size="12.738" fill="#e4e4ee" text-anchor="middle" stroke="#e4e4ee" stroke-width="0.3">nm</text><text transform="scale(1,1.3636)" x="322.50 330.50 338.50 346.50 354.50 362.50 370.50 378.50" y="485.10" font-family="Liberation Mono" font-size="13.333" fill="#101010" text-anchor="middle">1310.440</text><line x1="348.10" y1="653.10" x2="344.90" y2="657.90" stroke="#101010" stroke-width="1"/><line x1="380.10" y1="653.10" x2="376.90" y2="657.90" stroke="#101010" stroke-width="1"/><text transform="scale(1.0500,1)" x="373.33 380.95" y="660.20" font-family="Liberation Sans" font-size="12.738" fill="#e4e4ee" text-anchor="middle" stroke="#e4e4ee" stroke-width="0.3">nm</text><text transform="scale(1,1.3636)" x="484.00 492.00 500.00 508.00" y="485.10" font-family="Liberation Mono" font-size="13.333" fill="#101010" text-anchor="middle">1.00</text><line x1="501.60" y1="653.10" x2="498.40" y2="657.90" stroke="#101010" stroke-width="1"/><line x1="509.60" y1="653.10" x2="506.40" y2="657.90" stroke="#101010" stroke-width="1"/><line x1="531.80" y1="660.60" x2="538.20" y2="653.00" stroke="#e4e4ee" stroke-width="1.1"/><text transform="scale(1.0500,1)" x="494.29 501.90" y="660.60" font-family="Liberation Sans" font-size="13.446" fill="#e4e4ee" text-anchor="middle" stroke="#e4e4ee" stroke-width="0.3">nm</text><text transform="scale(1.0500,1)" x="517.14" y="660.60" font-family="Liberation Sans" font-size="11.047" fill="#e4e4ee" text-anchor="middle" stroke="#e4e4ee" stroke-width="0.3">D</text><text transform="scale(1,1.3636)" x="611.00 619.00 627.00 635.00 643.00 651.00 659.00 667.00" y="485.10" font-family="Liberation Mono" font-size="13.333" fill="#101010" text-anchor="middle">1315.440</text><line x1="668.60" y1="653.10" x2="665.40" y2="657.90" stroke="#101010" stroke-width="1"/><text transform="scale(1.0500,1)" x="646.86 654.48" y="660.20" font-family="Liberation Sans" font-size="12.738" fill="#e4e4ee" text-anchor="middle" stroke="#e4e4ee" stroke-width="0.3">nm</text><text transform="scale(1.0000,1)" x="90.75 98.65 106.55" y="679.80" font-family="Liberation Sans" font-size="10.465" fill="#16164c" text-anchor="middle" stroke="#16164c" stroke-width="0.5">TLS</text><text transform="scale(1.0000,1)" x="90.75 98.65 106.55" y="689.00" font-family="Liberation Sans" font-size="11.047" fill="#16164c" text-anchor="middle" stroke="#16164c" stroke-width="0.5">SYC</text><text transform="scale(1.0000,1)" x="121.75 129.65 137.55" y="679.80" font-family="Liberation Sans" font-size="10.465" fill="#16164c" text-anchor="middle" stroke="#16164c" stroke-width="0.5">OPT</text><text transform="scale(1.0000,1)" x="121.75 129.65 137.55" y="689.00" font-family="Liberation Sans" font-size="11.047" fill="#16164c" text-anchor="middle" stroke="#16164c" stroke-width="0.5">ATT</text><text transform="scale(1.0000,1)" x="152.75 160.65 168.55" y="679.80" font-family="Liberation Sans" font-size="10.465" fill="#16164c" text-anchor="middle" stroke="#16164c" stroke-width="0.5">LVL</text><text transform="scale(1.0000,1)" x="152.75 160.65 168.55" y="689.00" font-family="Liberation Sans" font-size="11.047" fill="#16164c" text-anchor="middle" stroke="#16164c" stroke-width="0.5">SHF</text><text transform="scale(0.8200,1)" x="224.09" y="679.80" font-family="Liberation Sans" font-size="10.465" fill="#16164c" text-anchor="middle" stroke="#16164c" stroke-width="0.5">W</text><text transform="scale(1.0000,1)" x="191.65" y="679.80" font-family="Liberation Sans" font-size="10.465" fill="#16164c" text-anchor="middle" stroke="#16164c" stroke-width="0.5">L</text><text transform="scale(1.0000,1)" x="183.75 191.65 199.55" y="689.00" font-family="Liberation Sans" font-size="11.047" fill="#16164c" text-anchor="middle" stroke="#16164c" stroke-width="0.5">SHF</text><path d="M228.50 673.10H232.60M230.55 672.60V679.80M228.50 679.30H232.60" stroke="#16164c" stroke-width="1.05" fill="none"/><text transform="scale(1.0000,1)" x="214.75 222.65" y="679.80" font-family="Liberation Sans" font-size="10.465" fill="#16164c" text-anchor="middle" stroke="#16164c" stroke-width="0.5">NO</text><text transform="scale(0.8200,1)" x="261.89" y="689.00" font-family="Liberation Sans" font-size="11.047" fill="#16164c" text-anchor="middle" stroke="#16164c" stroke-width="0.5">M</text><text transform="scale(1.0000,1)" x="222.65 230.55" y="689.00" font-family="Liberation Sans" font-size="11.047" fill="#16164c" text-anchor="middle" stroke="#16164c" stroke-width="0.5">SK</text><text transform="scale(1.0000,1)" x="245.75 253.65 261.55" y="679.80" font-family="Liberation Sans" font-size="10.465" fill="#ececf6" text-anchor="middle" stroke="#ececf6" stroke-width="0.5">SRC</text><text transform="scale(1.0000,1)" x="245.75 253.65" y="689.00" font-family="Liberation Sans" font-size="11.047" fill="#ececf6" text-anchor="middle" stroke="#ececf6" stroke-width="0.5">ZO</text><text transform="scale(0.8200,1)" x="318.96" y="689.00" font-family="Liberation Sans" font-size="11.047" fill="#ececf6" text-anchor="middle" stroke="#ececf6" stroke-width="0.5">M</text><text transform="scale(1.0000,1)" x="276.75 284.65 292.55" y="679.80" font-family="Liberation Sans" font-size="10.465" fill="#16164c" text-anchor="middle" stroke="#16164c" stroke-width="0.5">SRC</text><text transform="scale(1.0000,1)" x="276.75 284.65 292.55" y="689.00" font-family="Liberation Sans" font-size="11.047" fill="#16164c" text-anchor="middle" stroke="#16164c" stroke-width="0.5">1-2</text><text transform="scale(1.0000,1)" x="307.75 315.65 323.55" y="679.80" font-family="Liberation Sans" font-size="10.465" fill="#ececf6" text-anchor="middle" stroke="#ececf6" stroke-width="0.5">VAC</text><text transform="scale(0.8200,1)" x="375.30" y="689.00" font-family="Liberation Sans" font-size="11.047" fill="#ececf6" text-anchor="middle" stroke="#ececf6" stroke-width="0.5">W</text><text transform="scale(1.0000,1)" x="315.65" y="689.00" font-family="Liberation Sans" font-size="11.047" fill="#ececf6" text-anchor="middle" stroke="#ececf6" stroke-width="0.5">L</text><text transform="scale(1.0000,1)" x="338.75 346.65 354.55" y="679.80" font-family="Liberation Sans" font-size="10.465" fill="#ececf6" text-anchor="middle" stroke="#ececf6" stroke-width="0.5">AUT</text><text transform="scale(1.0000,1)" x="338.75 346.65 354.55" y="689.00" font-family="Liberation Sans" font-size="11.047" fill="#ececf6" text-anchor="middle" stroke="#ececf6" stroke-width="0.5">OFS</text><text transform="scale(1.0000,1)" x="369.75 377.65 385.55" y="679.80" font-family="Liberation Sans" font-size="10.465" fill="#16164c" text-anchor="middle" stroke="#16164c" stroke-width="0.5">AUT</text><text transform="scale(1.0000,1)" x="369.75 377.65 385.55" y="689.00" font-family="Liberation Sans" font-size="11.047" fill="#16164c" text-anchor="middle" stroke="#16164c" stroke-width="0.5">ANA</text><text transform="scale(1.0000,1)" x="400.75 408.65 416.55" y="679.80" font-family="Liberation Sans" font-size="10.465" fill="#16164c" text-anchor="middle" stroke="#16164c" stroke-width="0.5">AUT</text><text transform="scale(1.0000,1)" x="400.75 408.65 416.55" y="689.00" font-family="Liberation Sans" font-size="11.047" fill="#16164c" text-anchor="middle" stroke="#16164c" stroke-width="0.5">SRC</text><text transform="scale(1.0000,1)" x="431.75 439.65 447.55" y="679.80" font-family="Liberation Sans" font-size="10.465" fill="#16164c" text-anchor="middle" stroke="#16164c" stroke-width="0.5">AUT</text><text transform="scale(1.0000,1)" x="431.75 439.65 447.55" y="689.00" font-family="Liberation Sans" font-size="11.047" fill="#16164c" text-anchor="middle" stroke="#16164c" stroke-width="0.5">SCL</text><text transform="scale(1.0000,1)" x="462.75 470.65 478.55" y="679.80" font-family="Liberation Sans" font-size="10.465" fill="#16164c" text-anchor="middle" stroke="#16164c" stroke-width="0.5">AUT</text><text transform="scale(1.0000,1)" x="462.75 470.65 478.55" y="689.00" font-family="Liberation Sans" font-size="11.047" fill="#16164c" text-anchor="middle" stroke="#16164c" stroke-width="0.5">REF</text><text transform="scale(1.0000,1)" x="493.75 501.65 509.55" y="679.80" font-family="Liberation Sans" font-size="10.465" fill="#ececf6" text-anchor="middle" stroke="#ececf6" stroke-width="0.5">AUT</text><text transform="scale(1.0000,1)" x="493.75 501.65 509.55" y="689.00" font-family="Liberation Sans" font-size="11.047" fill="#ececf6" text-anchor="middle" stroke="#ececf6" stroke-width="0.5">CTR</text><text transform="scale(1.0000,1)" x="524.75 540.55" y="679.80" font-family="Liberation Sans" font-size="10.465" fill="#16164c" text-anchor="middle" stroke="#16164c" stroke-width="0.5">SP</text><text transform="scale(0.8200,1)" x="649.57" y="679.80" font-family="Liberation Sans" font-size="10.465" fill="#16164c" text-anchor="middle" stroke="#16164c" stroke-width="0.5">W</text><path d="M522.70 681.90H526.80M524.75 681.40V689.00M522.70 688.50H526.80" stroke="#16164c" stroke-width="1.05" fill="none"/><text transform="scale(1.0000,1)" x="532.65 540.55" y="689.00" font-family="Liberation Sans" font-size="11.047" fill="#16164c" text-anchor="middle" stroke="#16164c" stroke-width="0.5">NT</text><text transform="scale(1.0000,1)" x="555.75 571.55" y="679.80" font-family="Liberation Sans" font-size="10.465" fill="#ececf6" text-anchor="middle" stroke="#ececf6" stroke-width="0.5">SP</text><text transform="scale(0.8200,1)" x="687.38" y="679.80" font-family="Liberation Sans" font-size="10.465" fill="#ececf6" text-anchor="middle" stroke="#ececf6" stroke-width="0.5">W</text><text transform="scale(1.0000,1)" x="555.75 563.65 571.55" y="689.00" font-family="Liberation Sans" font-size="11.047" fill="#ececf6" text-anchor="middle" stroke="#ececf6" stroke-width="0.5">1-2</text><text transform="scale(1.0500,1)" x="566.29 574.10 581.90" y="685.00" font-family="Liberation Sans" font-size="11.628" fill="#e4e44c" text-anchor="middle" stroke="#e4e44c" stroke-width="0.2">RPT</text><text transform="scale(1.0500,1)" x="600.81 608.62 616.43" y="685.00" font-family="Liberation Sans" font-size="11.628" fill="#e4e44c" text-anchor="middle" stroke="#e4e44c" stroke-width="0.2">SGL</text><text transform="scale(1.0500,1)" x="635.29 643.10 650.90" y="685.00" font-family="Liberation Sans" font-size="11.628" fill="#e4e44c" text-anchor="middle" stroke="#e4e44c" stroke-width="0.2">STP</text></svg>
</body></html>
